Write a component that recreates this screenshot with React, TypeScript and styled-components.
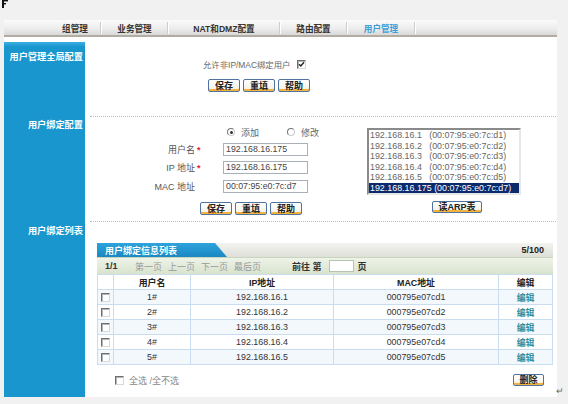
import styled, { createGlobalStyle } from "styled-components";

const GlobalStyle = createGlobalStyle`
  html, body {
    margin: 0;
    padding: 0;
    background: #f1f1f1;
  }
  body {
    font-family: "Liberation Sans", "Noto Sans CJK SC", sans-serif;
    font-size: 9px;
    color: #333;
  }
  * { box-sizing: border-box; }
`;

const Page = styled.div`
  position: relative;
  width: 568px;
  height: 404px;
  padding: 20px 0 0 4px;
`;

const Frame = styled.div`
  width: 553px;
`;

const NavBar = styled.div`
  display: flex;
  height: 17px;
  padding-left: 45px;
  background: linear-gradient(#fbfbfb, #ededed 55%, #d9d9d9);
  border-bottom: 2px solid #b2ada2;
`;

const NavItem = styled.div<{ $w: number; $active?: boolean }>`
  position: relative;
  width: ${(p) => p.$w}px;
  display: flex;
  align-items: center;
  justify-content: center;
  font-size: 8.6px;
  font-weight: bold;
  color: ${(p) => (p.$active ? "#3a9fd8" : "#333")};
  &::after {
    content: "";
    position: absolute;
    right: 0;
    top: 2px;
    bottom: 1px;
    width: 1px;
    background: #cdcdcd;
    box-shadow: 1px 0 0 #fff;
  }
`;

const Content = styled.div`
  background: #fff;
  padding-top: 5px;
`;

const Section = styled.div`
  display: flex;
`;

const SideCell = styled.div<{ $top: number; $first?: boolean }>`
  width: 81px;
  flex: none;
  padding: ${(p) => p.$top}px 2px 0 0;
  text-align: right;
  color: #fff;
  font-weight: bold;
  font-size: 9.2px;
  line-height: 11px;
  background: ${(p) =>
    p.$first ? "linear-gradient(#3bb0e3, #1996cd 5px)" : "#1996cd"};
`;

const Body = styled.div<{ $dotted?: boolean }>`
  flex: 1;
  margin: 0 1px 0 5px;
  border-bottom: ${(p) => (p.$dotted ? "1px dotted #8fcbe2" : "none")};
`;

const GlobalBody = styled(Body)`
  padding: 16px 0 24px 113px;
`;

const CheckRow = styled.div`
  display: flex;
  align-items: center;
  height: 12px;
  gap: 7px;
  color: #666;
  font-size: 8.4px;
`;

const ButtonRow = styled.div<{ $left?: number; $top?: number }>`
  display: flex;
  gap: 3px;
  margin-left: ${(p) => p.$left ?? 0}px;
  margin-top: ${(p) => p.$top ?? 0}px;
`;

const Button = styled.button<{ $w?: number; $h?: number }>`
  width: ${(p) => p.$w ?? 32}px;
  height: ${(p) => p.$h ?? 13}px;
  padding: 0;
  font-family: inherit;
  font-size: 9px;
  font-weight: bold;
  line-height: 10px;
  color: #222;
  border: 1px solid #50739f;
  border-radius: 2px;
  background: linear-gradient(#ffffff, #f1efe6);
  box-shadow: inset 0 -2px 0 #f2b33f, inset 0 1px 0 #fff;
`;

const Box = styled.span`
  display: inline-flex;
  align-items: center;
  justify-content: center;
  width: 9px;
  height: 9px;
  flex: none;
  vertical-align: middle;
  background: #fff;
  border: 1px solid;
  border-color: #6e6e6e #d8d8d8 #d8d8d8 #6e6e6e;
  box-shadow: inset 1px 1px 0 #b5b5b5;
`;

const Check = ({ on }: { on?: boolean }) => (
  <Box>
    {on && (
      <svg width="7" height="7" viewBox="0 0 7 7">
        <path d="M1 3.2 L2.8 5 L6 1.2" stroke="#222" strokeWidth="1.4" fill="none" />
      </svg>
    )}
  </Box>
);

const Circle = styled.span<{ $on?: boolean }>`
  position: relative;
  width: 8px;
  height: 8px;
  flex: none;
  border-radius: 50%;
  background: #fff;
  border: 1px solid;
  border-color: #777 #ccc #ccc #777;
  &::after {
    content: "";
    display: ${(p) => (p.$on ? "block" : "none")};
    position: absolute;
    left: 1.5px;
    top: 1.5px;
    width: 3px;
    height: 3px;
    border-radius: 50%;
    background: #333;
  }
`;

const BindBody = styled(Body)`
  display: flex;
  padding: 10px 0 6px 60px;
`;

const Form = styled.div`
  width: 162px;
  flex: none;
`;

const RadioRow = styled.div`
  display: flex;
  align-items: center;
  height: 10px;
  margin-left: 77px;
  color: #666;
  white-space: nowrap;
`;

const Radio = styled.label<{ $gap?: number }>`
  display: flex;
  flex: none;
  align-items: center;
  gap: 6px;
  margin-right: ${(p) => p.$gap ?? 0}px;
`;

const FieldRow = styled.div<{ $top: number }>`
  display: flex;
  align-items: center;
  height: 13px;
  margin-top: ${(p) => p.$top}px;
`;

const FieldLabel = styled.span`
  width: 45px;
  text-align: right;
  color: #555;
  white-space: nowrap;
`;

const Star = styled.span`
  width: 28px;
  padding-left: 2px;
  color: #e0202a;
  font-weight: bold;
`;

const TextBox = styled.div`
  width: 85px;
  height: 13px;
  border: 1px solid #a9b0b8;
  padding-left: 2px;
  line-height: 11px;
  color: #444;
  font-size: 8.8px;
`;

const ArpCol = styled.div`
  margin-left: 55px;
  padding-top: 1px;
`;

const ArpList = styled.div`
  width: 154px;
  height: 67px;
  border: 2px solid;
  border-color: #8a8a8a #e6e6e6 #e6e6e6 #8a8a8a;
  background: #fff;
`;

const ArpItem = styled.div<{ $sel?: boolean }>`
  height: 10.5px;
  line-height: 10.5px;
  padding-left: 1px;
  white-space: pre;
  font-size: 8.9px;
  color: ${(p) => (p.$sel ? "#fff" : "#666")};
  background: ${(p) => (p.$sel ? "#0b2a6c" : "transparent")};
`;

const ListBody = styled(Body)`
  padding: 21px 4px 11px 7px;
`;

const TabBar = styled.div`
  display: flex;
  align-items: center;
  height: 14px;
  background: linear-gradient(#f3f3f0, #dedfd8);
`;

const Tab = styled.div`
  align-self: stretch;
  width: 130px;
  padding-left: 8px;
  display: flex;
  align-items: center;
  color: #fff;
  font-weight: bold;
  background: linear-gradient(#2ea3dc, #1a88c2);
  clip-path: polygon(0 0, 118px 0, 130px 100%, 0 100%);
`;

const Count = styled.span`
  margin-left: auto;
  padding-right: 9px;
  font-weight: bold;
  color: #222;
`;

const Pager = styled.div`
  display: flex;
  align-items: center;
  height: 17px;
  padding-left: 8px;
  background: linear-gradient(#eef3e8, #d8e3cd);
  border-top: 1px solid #c9d6bc;
`;

const PageNo = styled.span`
  font-weight: bold;
  width: 30px;
  color: #333;
`;

const PageLink = styled.span`
  color: #999;
  margin-right: 6px;
`;

const PageText = styled.span<{ $left?: number }>`
  font-weight: bold;
  color: #333;
  margin-left: ${(p) => p.$left ?? 0}px;
`;

const PageInput = styled.span`
  width: 25px;
  height: 12px;
  margin: 0 4px 0 7px;
  background: #fff;
  border: 1px solid #b8c2b0;
`;

const Grid = styled.table`
  width: 455px;
  border-collapse: collapse;
  table-layout: fixed;
  th,
  td {
    height: 15px;
    padding: 0;
    border: 1px solid #cadcf0;
    text-align: center;
    font-size: 8.9px;
  }
  th {
    font-weight: bold;
    color: #222;
    background: #fff;
  }
`;

const Row = styled.tr<{ $alt?: boolean }>`
  background: ${(p) => (p.$alt ? "#f3f8fd" : "#fff")};
  td {
    color: #333;
  }
`;

const Edit = styled.span`
  color: #2f8f9d;
  font-weight: bold;
`;

const Footer = styled.div`
  display: flex;
  align-items: center;
  justify-content: space-between;
  height: 12px;
  margin-top: 9px;
  padding: 0 9px 0 18px;
`;

const SelectAll = styled.div`
  display: flex;
  align-items: center;
  gap: 5px;
  color: #888;
`;

const Corner = styled.div`
  position: absolute;
  left: 1px;
  top: 0;
  line-height: 0;
`;

const ReturnMark = styled.span`
  position: absolute;
  left: 556px;
  top: 386px;
  font-size: 9px;
  color: #666;
`;

const navItems = [
  { label: "组管理", w: 52 },
  { label: "业务管理", w: 67 },
  { label: "NAT和DMZ配置", w: 112 },
  { label: "路由配置", w: 67 },
  { label: "用户管理", w: 68, active: true },
];

const arp = [
  "192.168.16.1   (00:07:95:e0:7c:d1)",
  "192.168.16.2   (00:07:95:e0:7c:d2)",
  "192.168.16.3   (00:07:95:e0:7c:d3)",
  "192.168.16.4   (00:07:95:e0:7c:d4)",
  "192.168.16.5   (00:07:95:e0:7c:d5)",
  "192.168.16.175 (00:07:95:e0:7c:d7)",
];

const users = [1, 2, 3, 4, 5].map((i) => ({
  name: `${i}#`,
  ip: `192.168.16.${i}`,
  mac: `000795e07cd${i}`,
}));

export default function App() {
  return (
    <Page>
      <GlobalStyle />
      <Corner>
        <svg width="7" height="8" viewBox="0 0 7 8">
          <rect x="1" y="0" width="2" height="8" fill="#111" />
          <rect x="1" y="0" width="6" height="1.4" fill="#111" />
          <rect x="3" y="3" width="2" height="1.4" fill="#111" />
        </svg>
      </Corner>
      <Frame>
        <NavBar>
          {navItems.map((n) => (
            <NavItem key={n.label} $w={n.w} $active={n.active}>
              {n.label}
            </NavItem>
          ))}
        </NavBar>
        <Content>
          <Section>
            <SideCell $top={10} $first>
              用户管理全局配置
            </SideCell>
            <GlobalBody $dotted>
              <CheckRow>
                允许非IP/MAC绑定用户
                <Check on />
              </CheckRow>
              <ButtonRow $left={5} $top={9}>
                <Button>保存</Button>
                <Button>重填</Button>
                <Button>帮助</Button>
              </ButtonRow>
            </GlobalBody>
          </Section>

          <Section>
            <SideCell $top={3}>用户绑定配置</SideCell>
            <BindBody $dotted>
              <Form>
                <RadioRow>
                  <Radio $gap={28}>
                    <Circle $on />
                    添加
                  </Radio>
                  <Radio>
                    <Circle />
                    修改
                  </Radio>
                </RadioRow>
                <FieldRow $top={6}>
                  <FieldLabel>用户名</FieldLabel>
                  <Star>*</Star>
                  <TextBox>192.168.16.175</TextBox>
                </FieldRow>
                <FieldRow $top={5}>
                  <FieldLabel>IP 地址</FieldLabel>
                  <Star>*</Star>
                  <TextBox>192.168.16.175</TextBox>
                </FieldRow>
                <FieldRow $top={6}>
                  <FieldLabel>MAC 地址</FieldLabel>
                  <Star />
                  <TextBox>00:07:95:e0:7c:d7</TextBox>
                </FieldRow>
                <ButtonRow $left={50} $top={9}>
                  <Button>保存</Button>
                  <Button>重填</Button>
                  <Button>帮助</Button>
                </ButtonRow>
              </Form>
              <ArpCol>
                <ArpList>
                  {arp.map((a, i) => (
                    <ArpItem key={a} $sel={i === arp.length - 1}>
                      {a}
                    </ArpItem>
                  ))}
                </ArpList>
                <ButtonRow $left={65} $top={6}>
                  <Button $w={50} $h={12}>
                    读ARP表
                  </Button>
                </ButtonRow>
              </ArpCol>
            </BindBody>
          </Section>

          <Section>
            <SideCell $top={4}>用户绑定列表</SideCell>
            <ListBody>
              <TabBar>
                <Tab>用户绑定信息列表</Tab>
                <Count>5/100</Count>
              </TabBar>
              <Pager>
                <PageNo>1/1</PageNo>
                <PageLink>第一页</PageLink>
                <PageLink>上一页</PageLink>
                <PageLink>下一页</PageLink>
                <PageLink>最后页</PageLink>
                <PageText $left={25}>前往 第</PageText>
                <PageInput />
                <PageText>页</PageText>
              </Pager>
              <Grid>
                <colgroup>
                  <col style={{ width: 16 }} />
                  <col style={{ width: 77 }} />
                  <col style={{ width: 143 }} />
                  <col style={{ width: 165 }} />
                  <col style={{ width: 54 }} />
                </colgroup>
                <thead>
                  <tr>
                    <th />
                    <th>用户名</th>
                    <th>IP地址</th>
                    <th>MAC地址</th>
                    <th>编辑</th>
                  </tr>
                </thead>
                <tbody>
                  {users.map((u, i) => (
                    <Row key={u.name} $alt={i % 2 === 0}>
                      <td>
                        <Check />
                      </td>
                      <td>{u.name}</td>
                      <td>{u.ip}</td>
                      <td>{u.mac}</td>
                      <td>
                        <Edit>编辑</Edit>
                      </td>
                    </Row>
                  ))}
                </tbody>
              </Grid>
              <Footer>
                <SelectAll>
                  <Check />
                  全选 /全不选
                </SelectAll>
                <Button $w={31} $h={12}>
                  删除
                </Button>
              </Footer>
            </ListBody>
          </Section>
        </Content>
      </Frame>
      <ReturnMark>↵</ReturnMark>
    </Page>
  );
}
